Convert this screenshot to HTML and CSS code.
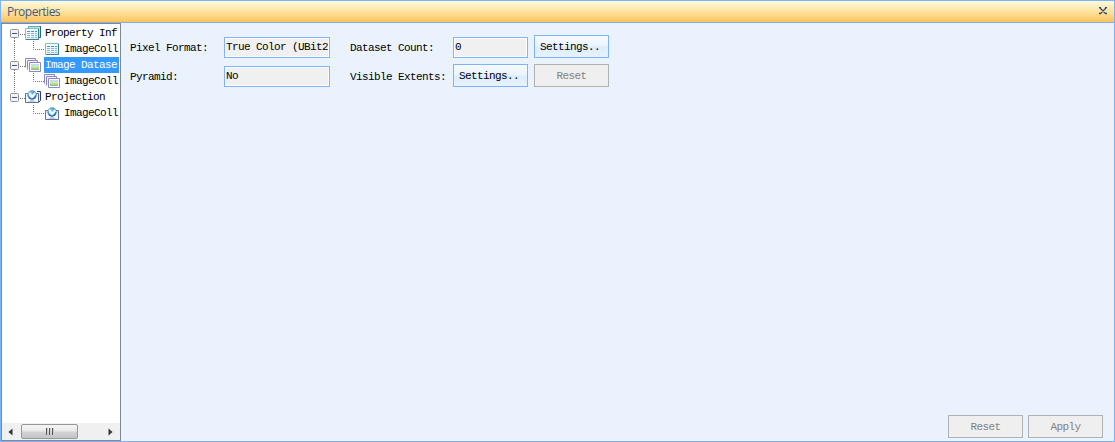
FILE: index.html
```html
<!DOCTYPE html>
<html lang="en">
<head>
<meta charset="utf-8">
<title>Properties</title>
<link rel="stylesheet" href="styles.css">
</head>
<body>
<svg class="defs" width="0" height="0">
  <defs>
    <linearGradient id="paper" x1="0" y1="0" x2="1" y2="1"><stop offset="0" stop-color="#fff"/><stop offset="1" stop-color="#d9f1f5"/></linearGradient>
    <linearGradient id="photo" x1="0" y1="0" x2="0" y2="1"><stop offset="0" stop-color="#b9dcf6"/><stop offset=".45" stop-color="#d5e6b0"/><stop offset="1" stop-color="#7fc070"/></linearGradient>
    <radialGradient id="ball" cx=".35" cy=".3" r=".75"><stop offset="0" stop-color="#8fd0f5"/><stop offset="1" stop-color="#17609f"/></radialGradient>
    <symbol id="table" viewBox="0 0 14 12">
      <path d="M.5.5h13v11H.5z" fill="url(#paper)" stroke="#7fc0c8"/>
      <path d="M13.500 1v10.500H1" fill="none" stroke="#3b7f8c"/>
      <path d="M2 3.500h3M6 3.500h3M10 3.500h2" stroke="#3b95d2"/>
      <path d="M2 5.500h3M6 5.500h3M10 5.500h2M2 7.500h3M6 7.500h3M10 7.500h2M2 9.500h3M6 9.500h3M10 9.500h2" stroke="#8db7da"/>
    </symbol>
    <symbol id="tables" viewBox="0 0 16 16">
      <path d="M3.500 3.500v-2h12v11h-2v-9z" fill="#b5e3e6" stroke="#5fa8b2"/>
      <path d="M15.500 1v11.500h-2" fill="none" stroke="#286b78"/>
      <use href="#table" x="0" y="3" width="14" height="12"/>
    </symbol>
    <symbol id="images" viewBox="0 0 16 16">
      <path d="M.5 10.500v-9h10v2" fill="#f6f5ff" stroke="#8c86c4"/>
      <path d="M2.500 12.500v-9h10v2" fill="#f6f5ff" stroke="#8c86c4"/>
      <path d="M4.500 5.500h11v9h-11z" fill="#fff" stroke="#8c86c4"/>
      <path d="M6 7h8v6H6z" fill="url(#photo)"/>
    </symbol>
    <symbol id="globe" viewBox="0 0 14 13">
      <path d="M.5 3.500h13v9H.5z" fill="#f5f8ff" stroke="#5b6f9c"/>
      <path d="M3 12l4-3 4 3z" fill="#c0cce4"/>
      <circle cx="7" cy="5" r="4.700" fill="url(#ball)"/>
      <path d="M3.500 2.500l2.500.5 1 2 3-3 1 2-2 3-2 1.500-2.500-2z" fill="#eefaff"/>
    </symbol>
    <symbol id="globes" viewBox="0 0 16 16">
      <path d="M12 2.500h3.500v9l-2 2" fill="#e8eefb" stroke="#2c3c80"/>
      <use href="#globe" x="0" y="1" width="14" height="13"/>
    </symbol>
    <symbol id="expander" viewBox="0 0 9 9">
      <rect x=".5" y=".5" width="8" height="8" rx="1" fill="#f4f4f4" stroke="#919191"/>
      <path d="M2 4.500h5" stroke="#3c50a0"/>
    </symbol>
  </defs>
</svg>
<div class="window">
  <header class="titlebar">
    <span>Properties</span>
    <svg class="close" width="8" height="8" viewBox="0 0 8 8"><path d="M0 .5h2M6 .5h2M0 6.500h2M6 6.500h2M1 1l5.500 5.500M7 1L1.500 6.500" stroke="#2f4779" stroke-width="1.300"/></svg>
  </header>
  <div class="body">
    <aside class="sidebar">
      <ul class="tree">
        <li class="node"><svg width="23" height="16"><path d="M12.500 13v3M18 9.500h5" class="dots"/><use href="#expander" x="8" y="4" width="9" height="9"/></svg><svg width="16" height="16"><use href="#tables"/></svg><span class="label">Property Inf</span></li>
        <li class="node"><svg width="42" height="16"><path d="M12.500 0v16M31.500 0v8.500H42" class="dots"/></svg><svg width="16" height="16"><use href="#table" x="1" y="2" width="14" height="12"/></svg><span class="label">ImageColl</span></li>
        <li class="node selected"><svg width="23" height="16"><path d="M12.500 0v4M12.500 13v3M18 9.500h5" class="dots"/><use href="#expander" x="8" y="4" width="9" height="9"/></svg><svg width="16" height="16"><use href="#images"/></svg><span class="label">Image Datase</span></li>
        <li class="node"><svg width="42" height="16"><path d="M12.500 0v16M31.500 0v8.500H42" class="dots"/></svg><svg width="16" height="16"><use href="#images"/></svg><span class="label">ImageColl</span></li>
        <li class="node"><svg width="23" height="16"><path d="M12.500 0v4M18 9.500h5" class="dots"/><use href="#expander" x="8" y="4" width="9" height="9"/></svg><svg width="16" height="16"><use href="#globes"/></svg><span class="label">Projection</span></li>
        <li class="node"><svg width="42" height="16"><path d="M31.500 0v8.500H42" class="dots"/></svg><svg width="16" height="16"><use href="#globe" x="1" y="2" width="14" height="13"/></svg><span class="label">ImageColl</span></li>
      </ul>
      <div class="scrollbar">
        <svg width="19" height="16"><path d="M10.500 4.500v7L6.500 8z" fill="#333"/></svg>
        <div class="thumb"><svg width="9" height="7"><path d="M1.500 0v7M4.500 0v7M7.500 0v7" stroke="#555"/><path d="M2.500 0v7M5.500 0v7M8.500 0v7" stroke="#ccc"/></svg></div>
        <svg width="18" height="16"><path d="M6.500 4.500v7l4-3.500z" fill="#333"/></svg>
      </div>
    </aside>
    <main class="content">
      <div class="form">
        <span class="name">Pixel Format:</span>
        <div class="field">True Color (UBit2</div>
        <span class="name second">Dataset Count:</span>
        <div class="field">0</div>
        <button class="button last">Settings..</button>
        <span class="name">Pyramid:</span>
        <div class="field">No</div>
        <span class="name second">Visible Extents:</span>
        <button class="button">Settings..</button>
        <button class="button last" disabled>Reset</button>
      </div>
      <footer class="actions">
        <button class="button" disabled>Reset</button>
        <button class="button" disabled>Apply</button>
      </footer>
    </main>
  </div>
</div>
</body>
</html>
```
FILE: styles.css
```css
* { box-sizing: border-box; }
body {
  margin: 0;
  overflow: hidden;
  font: 11px/16px "Liberation Mono", monospace;
  letter-spacing: -0.6px;
  color: #000;
}
.defs { position: absolute; }
svg { display: block; flex: none; }
.window {
  width: 1115px;
  height: 442px;
  display: flex;
  flex-direction: column;
  border: 1px solid #7eb4f7;
  background: #eaf2fe;
}
.titlebar {
  height: 22px;
  flex: none;
  display: flex;
  align-items: center;
  justify-content: space-between;
  padding: 1px 7px 0 6px;
  border-bottom: 1px solid #86aee0;
  background: linear-gradient(#fffadd, #fee6a6 45%, #fac45e);
  color: #3f5a88;
  font: 12px/20px "Open Sans", sans-serif;
  letter-spacing: -0.5px;
}
.close { margin-top: -2px; }
.body { flex: 1; display: flex; min-height: 0; }
.sidebar {
  width: 120px;
  display: flex;
  flex-direction: column;
  justify-content: space-between;
  border: 1px solid #828790;
  background: #fff;
}
.tree { list-style: none; margin: 0; padding: 1px 1px 0 0; }
.node { height: 16px; display: flex; }
.label { flex: 1; margin-left: 3px; padding-left: 1px; line-height: 17px; height: 16px; white-space: nowrap; }
.selected .label { background: #3399ff; color: #fff; }
.dots { fill: none; stroke: #777; stroke-dasharray: 1 1; }
.scrollbar { height: 17px; display: flex; align-items: center; background: #f0f0f0; }
.thumb {
  width: 57px;
  height: 15px;
  margin-right: auto;
  display: flex;
  align-items: center;
  justify-content: center;
  border: 1px solid #979797;
  border-radius: 2px;
  background: linear-gradient(#f5f5f5, #e9e9eb 48%, #d4d4d7 52%, #c4c4c8);
}
.content {
  flex: 1;
  display: flex;
  flex-direction: column;
  justify-content: space-between;
  padding: 12px 11px 3px 9px;
}
.form {
  display: grid;
  grid-template-columns: 94px 106px 123px 75px 81px;
  grid-template-rows: 23px 23px;
  row-gap: 6px;
  align-items: end;
}
.name { padding-bottom: 2px; white-space: nowrap; }
.second { padding-left: 20px; }
.field {
  height: 21px;
  padding-left: 1px;
  border: 1px solid #7eb4f7;
  box-shadow: inset 0 0 0 1px #fff;
  background: #f0f0f0;
  line-height: 18px;
  white-space: nowrap;
}
.button {
  width: 75px;
  height: 23px;
  padding: 1px 3px 0 0;
  border: 1px solid #7eb4f7;
  background: linear-gradient(#f6faff, #eaf4fe 48%, #dcecfc 52%, #e7f3fe);
  color: #000;
  font: inherit;
  letter-spacing: inherit;
}
.last { margin-left: 6px; }
.button:disabled { padding: 1px 0 0; border-color: #adb2b5; background: #efefef; color: #838383; }
.actions { display: flex; justify-content: flex-end; gap: 5px; }
```
